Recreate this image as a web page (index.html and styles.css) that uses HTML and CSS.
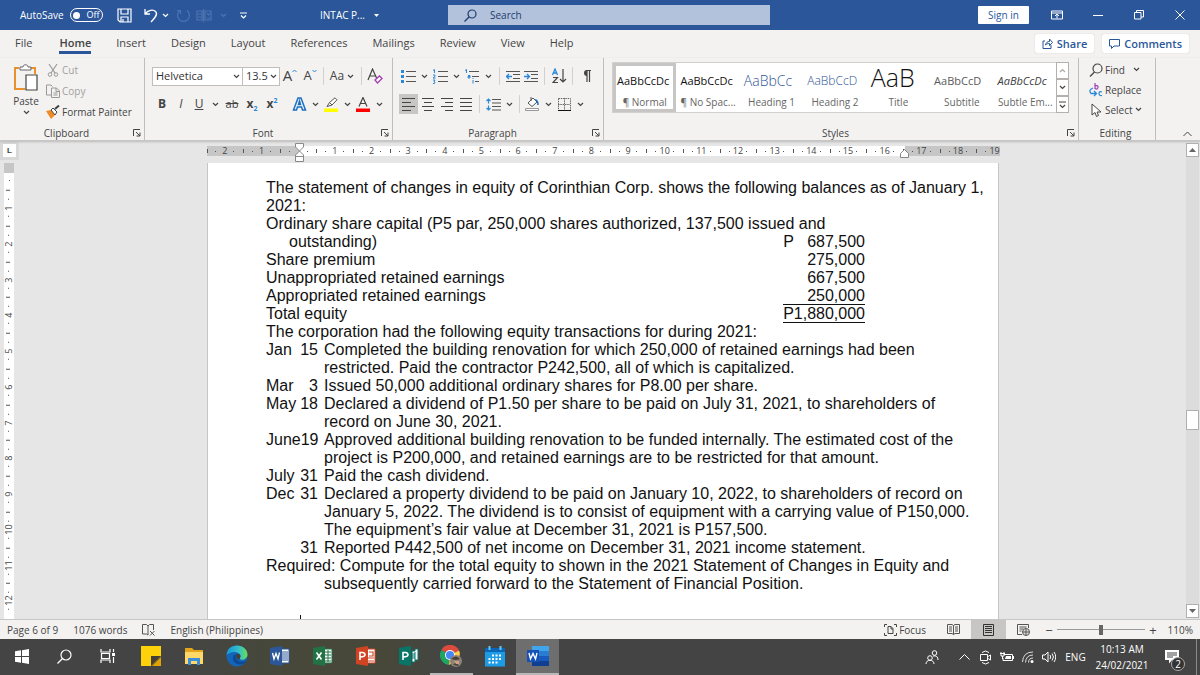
FILE: index.html
```html
<!DOCTYPE html>
<html lang="en">
<head>
<meta charset="utf-8">
<title>INTAC P... - Word</title>
<link rel="stylesheet" href="styles.css">
</head>
<body>
<svg class="sprite" aria-hidden="true">
  <symbol id="chev" viewBox="0 0 7 5"><path d="M1 1l2.500 2.500L6 1" fill="none" stroke="currentColor" stroke-width="1.200"/></symbol>
  <symbol id="launch" viewBox="0 0 8 8"><path d="M.5 7V.5H7M3 3l4 4M7 3.500V7H3.500" fill="none" stroke="#444"/></symbol>
  <symbol id="page-lines" viewBox="0 0 14 12"><path d="M1 .5h12v11H1zM3 3h8M3 5h8M3 7h8M3 9h8" fill="none" stroke="#333"/></symbol>
</svg>

<header class="titlebar">
  <div class="quick">
    <span class="autosave">AutoSave</span>
    <button class="toggle" aria-label="AutoSave off"><i></i>Off</button>
    <button class="q-save" aria-label="Save"><svg width="15" height="15" viewBox="0 0 15 15"><path d="M1 1h13v13H3l-2-2zM4 1v5h7V1M4 14V9h7v5M6 11v3" fill="none" stroke="#fff" stroke-width="1.200"/></svg></button>
    <button class="q-undo" aria-label="Undo"><svg width="14" height="15" viewBox="0 0 14 15"><path d="M1 1v5h5M1 6C4 2 9 1 11.500 3.500S12 9 7 14" fill="none" stroke="#fff" stroke-width="1.300"/></svg></button>
    <button class="q-chev" aria-label="Undo options"><svg width="7" height="5"><use href="#chev"/></svg></button>
    <button class="q-redo dim" aria-label="Redo"><svg width="15" height="15" viewBox="0 0 15 15"><path d="M4 2.500a6 6 0 1 0 7 0M4.500 6V2.500H1" fill="none" stroke="currentColor" stroke-width="1.200"/></svg></button>
    <button class="q-comp dim" aria-label="Compare"><svg width="16" height="13" viewBox="0 0 16 13"><path d="M1 2h5v9H1zM9 2h6v9H9zM7.500 0v13M2 8h3M2 5h3M11 4l1.500 2L14 4M11 9h3" fill="none" stroke="currentColor" stroke-width="1.200"/></svg></button>
    <button class="q-chev dim" aria-label="Compare options"><svg width="7" height="5"><use href="#chev"/></svg></button>
    <button class="q-more" aria-label="Customize"><svg width="7" height="7" viewBox="0 0 7 7"><path d="M0 1h7M1 3.500l2.500 2.500L6 3.500" fill="none" stroke="#fff" stroke-width="1.200"/></svg></button>
    <button class="doc-name">INTAC P... <svg width="5" height="3" viewBox="0 0 5 3"><path d="M0 0h5L2.500 3z" fill="#fff"/></svg></button>
  </div>
  <label class="search"><svg width="13" height="13" viewBox="0 0 13 13"><circle cx="8" cy="5" r="4" fill="none" stroke="#1e3c6e" stroke-width="1.200"/><path d="M5 8l-4.500 4.500" stroke="#1e3c6e" stroke-width="1.200"/></svg><input type="text" placeholder="Search" aria-label="Search"></label>
  <div class="window-tools">
    <button class="signin">Sign in</button>
    <button class="win" aria-label="Ribbon display options"><svg width="12" height="10" viewBox="0 0 12 10"><path d="M.5 1h11v8H.5zM.5 3h11M6 8.500V4.500M4 6l2-2 2 2" fill="none" stroke="#fff"/></svg></button>
    <button class="win" aria-label="Minimize"><svg width="10" height="10" viewBox="0 0 10 10"><path d="M0 5.500h10" stroke="#fff"/></svg></button>
    <button class="win" aria-label="Restore"><svg width="10" height="10" viewBox="0 0 10 10"><path d="M.5 2.500h6.500v6.500H.5zM2.500 2.500v-2h7v6.500H7" fill="none" stroke="#fff"/></svg></button>
    <button class="win" aria-label="Close"><svg width="10" height="10" viewBox="0 0 10 10"><path d="M.5.5l9 9M9.500.5l-9 9" stroke="#fff"/></svg></button>
  </div>
</header>

<nav class="tabs">
  <button class="file">File</button><button class="current">Home</button><button>Insert</button><button>Design</button><button>Layout</button><button>References</button><button>Mailings</button><button>Review</button><button>View</button><button>Help</button>
  <div class="tab-actions">
    <button><svg width="11" height="11" viewBox="0 0 11 11"><path d="M3 3H1v7.500h8V7M3.500 7C4 4.500 5.500 3.500 7.500 3.500V1l3 3.500-3 3V5.500c-2 0-3 .5-4 1.500z" fill="none" stroke="#2b579a"/></svg>Share</button>
    <button><svg width="11" height="10" viewBox="0 0 11 10"><path d="M.5.5h10v6.500H5L2.500 9.500V7h-2z" fill="none" stroke="#2b579a"/></svg>Comments</button>
  </div>
</nav>

<section class="ribbon">
  <div class="group clipboard">
    <div class="tools clip-tools">
      <button class="paste"><svg width="26" height="29" viewBox="0 0 26 29"><path d="M6 5H2v21h10M18 5h4v6" fill="none" stroke="#e8912d" stroke-width="2"/><path d="M7 7V4h3c0-3 5-3 5 0h3v3z" fill="#fff" stroke="#666"/><path d="M13 12h11v15H13z" fill="#fff" stroke="#444" stroke-width="1.200"/></svg><span>Paste</span><svg width="7" height="5"><use href="#chev"/></svg></button>
      <div class="stack">
        <button class="off"><svg width="14" height="14" viewBox="0 0 14 14"><path d="M3 1l6 9M11 1L5 10" stroke="#999" stroke-width="1.200"/><circle cx="4" cy="11.500" r="1.800" fill="none" stroke="#999"/><circle cx="10" cy="11.500" r="1.800" fill="none" stroke="#999"/></svg>Cut</button>
        <button class="off"><svg width="14" height="14" viewBox="0 0 14 14"><path d="M5 11H.5V1H5l1.500 1.500M5.500 4h5l3 3v6.500h-8zM10 4v3.500h3.500M7.500 9h4M7.500 11h4" fill="none" stroke="#999"/></svg>Copy</button>
        <button><svg width="14" height="14" viewBox="0 0 14 14"><path d="M0 6l5-1 4 5-4 4z" fill="#f08a24"/><path d="M5 5l2-2 4 4-2 3z" fill="#fff" stroke="#444"/><path d="M9 4l4-3.500" stroke="#444" stroke-width="2"/></svg>Format Painter</button>
      </div>
    </div>
    <div class="caption"><span>Clipboard</span><svg width="8" height="8"><use href="#launch"/></svg></div>
  </div>

  <div class="group font">
    <div class="tools rows">
      <div class="row">
        <select class="face" aria-label="Font"><option>Helvetica</option></select><select class="size" aria-label="Font size"><option>13.5</option></select>
        <button class="w20 big" aria-label="Grow font">A<svg width="5" height="4" viewBox="0 0 5 4"><path d="M.5 3L2.500 1l2 2" fill="none" stroke="#2b88d8"/></svg></button>
        <button class="w20 mid" aria-label="Shrink font">A<svg width="5" height="4" viewBox="0 0 5 4"><path d="M.5 1l2 2 2-2" fill="none" stroke="#2b88d8"/></svg></button>
        <i class="sep tight"></i>
        <button class="w30 case">Aa<svg width="7" height="5"><use href="#chev"/></svg></button>
        <i class="sep"></i>
        <button class="w18" aria-label="Clear formatting"><svg width="16" height="16" viewBox="0 0 16 16"><path d="M1 12L5.500 1 10 11M3 8h5" fill="none" stroke="#444" stroke-width="1.200"/><path d="M8 12l4.500-4 2.500 2.500-4.500 4.500z" fill="#fff" stroke="#a33db5" stroke-width="1.300"/></svg></button>
      </div>
      <div class="row">
        <button class="w20"><b>B</b></button>
        <button class="w18"><em>I</em></button>
        <button class="w18"><u>U</u></button>
        <button class="w14" aria-label="Underline style"><svg width="7" height="5"><use href="#chev"/></svg></button>
        <button class="w20 strike"><s>ab</s></button>
        <button class="w20"><b>x<sub>2</sub></b></button>
        <button class="w20"><b>x<sup>2</sup></b></button>
        <i class="sep"></i>
        <button class="w18" aria-label="Text effects"><svg width="15" height="14" viewBox="0 0 15 14"><path d="M1.500 13L6 1h3l4.500 12h-3L9.500 10h-4l-1 3zM6.500 7.500h2L7.500 4z" fill="#e8f3fc" stroke="#1f6fc0" stroke-width="1.500"/></svg></button>
        <button class="w14" aria-label="Text effects options"><svg width="7" height="5"><use href="#chev"/></svg></button>
        <button class="w18" aria-label="Highlight"><svg width="15" height="15" viewBox="0 0 15 15"><path d="M0 11.500h14V15H0z" fill="#ff0"/><path d="M3 9.500l2.500-4L11 .8l2 2L8 8l-5 1.500zM5.500 5.500L8 8" fill="#fff" stroke="#555"/></svg></button>
        <button class="w14" aria-label="Highlight options"><svg width="7" height="5"><use href="#chev"/></svg></button>
        <button class="w18" aria-label="Font colour"><svg width="15" height="15" viewBox="0 0 15 15"><path d="M0 11.500h14V15H0z" fill="red"/><path d="M3 9.500L7 .5l4 9M4.500 6.500h5" fill="none" stroke="#444" stroke-width="1.200"/></svg></button>
        <button class="w14" aria-label="Font colour options"><svg width="7" height="5"><use href="#chev"/></svg></button>
      </div>
    </div>
    <div class="caption"><span>Font</span><svg width="8" height="8"><use href="#launch"/></svg></div>
  </div>

  <div class="group para">
    <div class="tools rows">
      <div class="row">
        <button class="w18" aria-label="Bullets"><svg width="15" height="14" viewBox="0 0 15 14"><path d="M5 2.500h10M5 7.500h10M5 12.500h10" stroke="#555"/><path d="M0 1h3v3H0zM0 6h3v3H0zM0 11h3v3H0z" fill="#2b88d8"/></svg></button>
        <button class="w14" aria-label="Bullet options"><svg width="7" height="5"><use href="#chev"/></svg></button>
        <button class="w18" aria-label="Numbering"><svg width="15" height="15" viewBox="0 0 15 15"><path d="M5 2.500h10M5 7.500h10M5 12.500h10" stroke="#555"/><path d="M0 1.500L1.500.5V4M0 6h2v1.500L0 9h2.500M0 11h2l-1 1.500 1 .5-.5 1.500H0" fill="none" stroke="#2b88d8"/></svg></button>
        <button class="w14" aria-label="Numbering options"><svg width="7" height="5"><use href="#chev"/></svg></button>
        <button class="w18" aria-label="Multilevel list"><svg width="15" height="15" viewBox="0 0 15 15"><path d="M4 2.500h10M7 7.500h7M10 12.500h4" stroke="#555"/><path d="M0 1.500L1.500.5V4M3 6.500h2V9H3V7.500h2M8 11v3.500M8 9v1" fill="none" stroke="#2b88d8"/></svg></button>
        <button class="w14" aria-label="Multilevel options"><svg width="7" height="5"><use href="#chev"/></svg></button>
        <i class="sep"></i>
        <button class="w18" aria-label="Decrease indent"><svg width="14" height="13" viewBox="0 0 14 13"><path d="M0 1.500h14M7 4.500h7M7 8.500h7M0 11.500h14" stroke="#555"/><path d="M0 6.500h6M3 4L.5 6.500 3 9" fill="none" stroke="#2b88d8" stroke-width="1.300"/></svg></button>
        <button class="w18" aria-label="Increase indent"><svg width="14" height="13" viewBox="0 0 14 13"><path d="M0 1.500h14M7 4.500h7M7 8.500h7M0 11.500h14" stroke="#555"/><path d="M0 6.500h5.500M3 4l2.500 2.500L3 9" fill="none" stroke="#2b88d8" stroke-width="1.300"/></svg></button>
        <i class="sep"></i>
        <button class="w20" aria-label="Sort"><svg width="15" height="16" viewBox="0 0 15 16"><path d="M.5 7L3 1l2.500 6M1.500 5h3" fill="none" stroke="#2b88d8" stroke-width="1.300"/><path d="M1 9.500h4.500L1 14.500h5" fill="none" stroke="#444" stroke-width="1.200"/><path d="M11 1v13M8 11l3 3 3-3" fill="none" stroke="#444" stroke-width="1.200"/></svg></button>
        <i class="sep tight"></i>
        <button class="w20" aria-label="Show marks"><svg width="9" height="12" viewBox="0 0 9 12"><path d="M5 0a3 3 0 0 0 0 6z" fill="#444"/><path d="M4 .5h5M5 0v12M7.500 0v12" stroke="#444" stroke-width="1.200"/></svg></button>
      </div>
      <div class="row">
        <button class="w19 on" aria-label="Align left"><svg width="14" height="13" viewBox="0 0 14 13"><path d="M0 .5h13M0 4.500h9M0 8.500h13M0 12.500h9" stroke="#444"/></svg></button>
        <button class="w19" aria-label="Centre"><svg width="14" height="13" viewBox="0 0 14 13"><path d="M1 .5h12M3 4.500h8M1 8.500h12M3 12.500h8" stroke="#444"/></svg></button>
        <button class="w19" aria-label="Align right"><svg width="14" height="13" viewBox="0 0 14 13"><path d="M1 .5h12M5 4.500h8M1 8.500h12M5 12.500h8" stroke="#444"/></svg></button>
        <button class="w19" aria-label="Justify"><svg width="14" height="13" viewBox="0 0 14 13"><path d="M1 .5h12M1 4.500h12M1 8.500h12M1 12.500h12" stroke="#444"/></svg></button>
        <i class="sep"></i>
        <button class="w18" aria-label="Line spacing"><svg width="15" height="13" viewBox="0 0 15 13"><path d="M6 1.500h9M6 5h9M6 8.500h9M6 12h9" stroke="#555"/><path d="M2.500 1v4.500M.5 3l2-2 2 2M2.500 7.500V12M.5 10l2 2 2-2" fill="none" stroke="#2b88d8" stroke-width="1.200"/></svg></button>
        <button class="w14" aria-label="Line spacing options"><svg width="7" height="5"><use href="#chev"/></svg></button>
        <i class="sep tight"></i>
        <button class="w18" aria-label="Shading"><svg width="15" height="14" viewBox="0 0 15 14"><path d="M.5 11.500h13v2H.5z" fill="#fff" stroke="#999"/><path d="M3 6l5-5 4 4-5 4.500zM6 0v4" fill="#fff" stroke="#555"/><path d="M10 3q3 0 3 5" fill="none" stroke="#1f6fc0" stroke-width="1.500"/></svg></button>
        <button class="w14" aria-label="Shading options"><svg width="7" height="5"><use href="#chev"/></svg></button>
        <button class="w18" aria-label="Borders"><svg width="13" height="13" viewBox="0 0 13 13"><path d="M.5.5h12v12M.5.5v12M6.500 0v12M0 6.500h12" fill="none" stroke="#666" stroke-dasharray="1.500 .8"/><path d="M0 12.500h13" stroke="#111"/></svg></button>
        <button class="w14" aria-label="Borders options"><svg width="7" height="5"><use href="#chev"/></svg></button>
      </div>
    </div>
    <div class="caption"><span>Paragraph</span><svg width="8" height="8"><use href="#launch"/></svg></div>
  </div>

  <div class="group styles">
    <div class="tools gallery">
      <button class="style chosen"><span class="sample">AaBbCcDc</span><span>¶ Normal</span></button>
      <button class="style"><span class="sample">AaBbCcDc</span><span>¶ No Spac...</span></button>
      <button class="style"><span class="sample h1">AaBbCc</span><span>Heading 1</span></button>
      <button class="style"><span class="sample h2">AaBbCcD</span><span>Heading 2</span></button>
      <button class="style"><span class="sample title">AaB</span><span>Title</span></button>
      <button class="style"><span class="sample sub">AaBbCcD</span><span>Subtitle</span></button>
      <button class="style"><span class="sample subtle">AaBbCcDc</span><span>Subtle Em...</span></button>
      <div class="gallery-nav">
        <button class="faint" aria-label="Up"><svg width="7" height="5" class="flip"><use href="#chev"/></svg></button>
        <button aria-label="Down"><svg width="7" height="5"><use href="#chev"/></svg></button>
        <button aria-label="More"><svg width="7" height="8" viewBox="0 0 7 8"><path d="M0 1h7M1 4l2.500 2.500L6 4" fill="none" stroke="#444" stroke-width="1.200"/></svg></button>
      </div>
    </div>
    <div class="caption"><span>Styles</span><svg width="8" height="8"><use href="#launch"/></svg></div>
  </div>

  <div class="group editing">
    <div class="tools stack">
      <button><svg width="14" height="14" viewBox="0 0 14 14"><circle cx="8.500" cy="5.500" r="4.500" fill="none" stroke="#444" stroke-width="1.200"/><path d="M5.500 9L1 13.500" stroke="#444" stroke-width="1.200"/></svg>Find <svg class="far" width="7" height="5"><use href="#chev"/></svg></button>
      <button><svg width="14" height="14" viewBox="0 0 14 14"><path d="M6 0v6M6 3q3.500-1 3 1.500T6 5.500" fill="none" stroke="#a33db5" stroke-width="1.200"/><path d="M13 9q-3-1-3 1.500T13 12.500" fill="none" stroke="#2b88d8" stroke-width="1.200"/><path d="M4 5Q-1 7 2 10.500H7M5 8l2.500 2.500L5 13" fill="none" stroke="#2b88d8" stroke-width="1.300"/></svg>Replace</button>
      <button><svg width="14" height="14" viewBox="0 0 14 14"><path d="M3 1v11l3-2.500 1.500 4 2-1L8 9h4z" fill="#fff" stroke="#444"/></svg>Select <svg width="7" height="5"><use href="#chev"/></svg></button>
    </div>
    <div class="caption"><span>Editing</span></div>
  </div>
  <button class="collapse" aria-label="Collapse ribbon"><svg width="9" height="6" viewBox="0 0 9 6"><path d="M.5 5l4-4 4 4" fill="none" stroke="#444"/></svg></button>
</section>

<main class="workspace">
  <div class="vside">
    <span class="tabstop">L</span>
    <div class="vruler">
      <span class="vgray"></span><span class="vlead"></span>
      <div class="vscale"><span>1</span><span>2</span><span>3</span><span>4</span><span>5</span><span>6</span><span>7</span><span>8</span><span>9</span><span>10</span><span>11</span><span>12</span></div>
    </div>
  </div>
  <div class="canvas">
    <div class="ruler">
      <div class="scale"><span>2</span><span>1</span><span></span><span>1</span><span>2</span><span>3</span><span>4</span><span>5</span><span>6</span><span>7</span><span>8</span><span>9</span><span>10</span><span>11</span><span>12</span><span>13</span><span>14</span><span>15</span><span>16</span><span>17</span><span>18</span><span>19</span></div>
      <svg class="mark-left" width="9" height="19" viewBox="0 0 9 19"><path d="M.5.5h8v3.500l-4 4-4-4zM4.500 8l4 4v6.500h-8V12zM.5 13.500h8" fill="#fff" stroke="#888"/></svg>
      <svg class="mark-right" width="9" height="9" viewBox="0 0 9 9"><path d="M4.500.5l4 4v4h-8v-4z" fill="#fff" stroke="#888"/></svg>
    </div>
    <article class="page">
      <p>The statement of changes in equity of Corinthian Corp. shows the following balances as of January 1,<br>2021:</p>
      <table class="balances">
        <tr><th colspan="3">Ordinary share capital (P5 par, 250,000 shares authorized, 137,500 issued and</th></tr>
        <tr><th class="indent">outstanding)</th><td>P</td><td class="num">687,500</td></tr>
        <tr><th>Share premium</th><td></td><td class="num">275,000</td></tr>
        <tr><th>Unappropriated retained earnings</th><td></td><td class="num">667,500</td></tr>
        <tr><th>Appropriated retained earnings</th><td class="rule"></td><td class="num rule">250,000</td></tr>
        <tr><th>Total equity</th><td class="num rule" colspan="2">P1,880,000</td></tr>
      </table>
      <p>The corporation had the following equity transactions for during 2021:</p>
      <div class="entries">
        <div class="date"><span>Jan</span><span>15</span></div><p>Completed the building renovation for which 250,000 of retained earnings had been<br>restricted. Paid the contractor P242,500, all of which is capitalized.</p>
        <div class="date"><span>Mar</span><span>3</span></div><p>Issued 50,000 additional ordinary shares for P8.00 per share.</p>
        <div class="date"><span>May</span><span>18</span></div><p>Declared a dividend of P1.50 per share to be paid on July 31, 2021, to shareholders of<br>record on June 30, 2021.</p>
        <div class="date"><span>June</span><span>19</span></div><p>Approved additional building renovation to be funded internally. The estimated cost of the<br>project is P200,000, and retained earnings are to be restricted for that amount.</p>
        <div class="date"><span>July</span><span>31</span></div><p>Paid the cash dividend.</p>
        <div class="date"><span>Dec</span><span>31</span></div><p>Declared a property dividend to be paid on January 10, 2022, to shareholders of record on<br>January 5, 2022. The dividend is to consist of equipment with a carrying value of P150,000.<br>The equipment’s fair value at December 31, 2021 is P157,500.</p>
        <div class="date"><span></span><span>31</span></div><p>Reported P442,500 of net income on December 31, 2021 income statement.</p>
      </div>
      <p class="required">Required: Compute for the total equity to shown in the 2021 Statement of Changes in Equity and<br>subsequently carried forward to the Statement of Financial Position.</p>
      <i class="caret"></i>
    </article>
  </div>
  <div class="scrollbar">
    <button aria-label="Scroll up"><svg width="7" height="4" viewBox="0 0 7 4"><path d="M0 4h7L3.500 0z" fill="#666"/></svg></button>
    <div class="track"><i class="thumb"></i></div>
    <button aria-label="Scroll down"><svg width="7" height="4" viewBox="0 0 7 4"><path d="M0 0h7L3.500 4z" fill="#666"/></svg></button>
  </div>
</main>

<footer class="status">
  <span>Page 6 of 9</span><span>1076 words</span>
  <svg width="13" height="12" viewBox="0 0 13 12"><path d="M6 2L4.500.5H.5v9.500h4L6 11M6 2v9M6 2L7.500.5h4V6M8 7l4.500 4.500M12.500 7L8 11.500" fill="none" stroke="#555"/></svg>
  <span>English (Philippines)</span>
  <div class="views">
    <button class="focus"><svg width="13" height="12" viewBox="0 0 13 12"><path d="M.5 3V.5H3M10 .5h2.500V3M12.500 9v2.500H10M3 11.500H.5V9M4 2.500h3l2 2v5H4zM7 2.500V5h2" fill="none" stroke="#444"/></svg>Focus</button>
    <button class="view" aria-label="Read mode"><svg width="13" height="11" viewBox="0 0 13 11"><path d="M.5.5h4.500l1.500 1L8 .5h4.500v9H8l-1.500 1-1.500-1H.5zM6.500 1.500v9M2 3h3M2 5h3M2 7h3M8 3h3M8 5h3M8 7h3" fill="none" stroke="#555"/></svg></button>
    <button class="view on" aria-label="Print layout"><svg width="11" height="12" viewBox="0 0 11 12"><path d="M.5.5h10v11H.5zM2 2.500h7M2 4.500h7M2 6.500h7M2 8.500h7" fill="none" stroke="#333"/></svg></button>
    <button class="view" aria-label="Web layout"><svg width="13" height="12" viewBox="0 0 13 12"><path d="M5 10.500H.5v-10h11V4M2.500 3h7M2.500 5h4M2.500 7h2" fill="none" stroke="#555"/><circle cx="9" cy="8" r="3.500" fill="#ddd" stroke="#555"/><path d="M5.500 8h7M9 4.500v7" stroke="#555"/></svg></button>
    <button class="step">−</button><input type="range" min="10" max="196" value="104" aria-label="Zoom"><button class="step">+</button>
    <span class="percent">110%</span>
  </div>
</footer>

<nav class="taskbar">
  <button aria-label="Start"><svg width="14" height="15" viewBox="0 0 14 15"><path d="M0 2.200L6 1.300V7H0zM7 1.200L14 0v7H7zM0 8h6v5.700L0 12.800zM7 8h7v7L7 13.800z" fill="#fff"/></svg></button>
  <button aria-label="Search"><svg width="15" height="15" viewBox="0 0 15 15"><circle cx="9" cy="6" r="5" fill="none" stroke="#fff" stroke-width="1.200"/><path d="M5.500 9.500L.5 14.500" stroke="#fff" stroke-width="1.300"/></svg></button>
  <button aria-label="Task view"><svg width="16" height="14" viewBox="0 0 16 14"><path d="M1 0v3h9V0M1 14v-3h9v3M1.500 4.500h8v5h-8zM13.500 0v3M13.500 8v6" fill="none" stroke="#fff" stroke-width="1.200"/><path d="M12 4h3v3h-3z" fill="#fff"/></svg></button>
  <button aria-label="Sticky Notes"><svg width="20" height="20" viewBox="0 0 20 20"><path d="M0 0h20v10L10 20H0z" fill="#fdd20a"/><path d="M10 10h10L10 20z" fill="#453f35"/><path d="M20 11v9h-9z" fill="#e0a300"/></svg></button>
  <button aria-label="File Explorer"><svg width="20" height="17" viewBox="0 0 20 17"><path d="M1 0h7l2 2h9v13H1z" fill="#e5a51b"/><path d="M1 4h18v12H1z" fill="#ffd869"/><path d="M4 10h12v7h-3v-4H7v4H4z" fill="#3b8fd8"/></svg></button>
  <button aria-label="Edge"><svg width="22" height="22" viewBox="0 0 22 22"><defs><linearGradient id="eg" x1="0" x2="1"><stop offset="0" stop-color="#1593dc"/><stop offset=".6" stop-color="#35c1c5"/><stop offset="1" stop-color="#6cdc55"/></linearGradient></defs><circle cx="11" cy="11" r="10.500" fill="#1265b8"/><path d="M.5 10C1 4 5 .5 11 .5s10.500 4 10.500 9c0 4-4 6-7 5-2-1 0-2 0-4-1-4-9-5-14-.5z" fill="url(#eg)"/><path d="M8 10c-3 5 1 10 7 9.500 3 0 5-3 6-4-3 1-6 2-9 0-2-1-3-3-2-6z" fill="#0c4a96"/><path d="M10 9.500c2-1 4.500 0 4.500 2 0 1-1.500 2 0 3-3 0-5-2-4.500-5z" fill="#414238"/></svg></button>
  <button aria-label="Word 2016"><svg width="20" height="20" viewBox="0 0 20 20"><path d="M9 3h10v14H9z" fill="#fff" stroke="#2b579a"/><path d="M12 6h6M12 8h6M12 10h6M12 12h6M12 14h6" stroke="#2b579a"/><path d="M0 2l12-2v20L0 18z" fill="#2b579a"/><path d="M2.500 7l1.500 6 2-5.500L8 13l1.500-6.500" fill="none" stroke="#fff" stroke-width="1.300"/></svg></button>
  <button aria-label="Excel"><svg width="20" height="20" viewBox="0 0 20 20"><path d="M9 3h10v14H9z" fill="#fff" stroke="#217346"/><path d="M12 6h6M12 9h6M12 12h6M12 15h6M15 4v12" stroke="#217346"/><path d="M0 2l12-2v20L0 18z" fill="#217346"/><path d="M3.500 6.500l5 7M8.500 6.500l-5 7" stroke="#fff" stroke-width="1.600"/></svg></button>
  <button aria-label="PowerPoint"><svg width="20" height="20" viewBox="0 0 20 20"><path d="M9 3h10v14H9z" fill="#fff" stroke="#d04423"/><path d="M12 12h6M12 15h6M13 6h4v4h-4" fill="none" stroke="#d04423" stroke-width="1.200"/><path d="M0 2l12-2v20L0 18z" fill="#d04423"/><path d="M4 14V6.500h2.500q2.500.3 2.500 2.300T4 11" fill="none" stroke="#fff" stroke-width="1.600"/></svg></button>
  <button aria-label="Publisher"><svg width="20" height="20" viewBox="0 0 20 20"><path d="M13 5h3V3h3v11h-3v2h-3z" fill="#fff" stroke="#077568"/><path d="M13 8h3M13 10h3M13 12h3M16 6v8" stroke="#077568"/><path d="M0 2l12-2v20L0 18z" fill="#077568"/><path d="M4 14V6.500h2.500q2.500.3 2.500 2.300T4 11" fill="none" stroke="#fff" stroke-width="1.600"/></svg></button>
  <button class="running" aria-label="Chrome"><svg width="23" height="23" viewBox="0 0 23 23"><path d="M10 10L1.300 5A10 10 0 0 1 19 5.500z" fill="#dd4b3e"/><path d="M10 10L1.300 5A10 10 0 0 0 9 20z" fill="#1fa463"/><path d="M10 10l9-4.500Q23 13 9 20z" fill="#ffcd46"/><circle cx="10" cy="10" r="5" fill="#fff"/><circle cx="10" cy="10" r="4" fill="#4587f4"/><circle cx="16" cy="16" r="6" fill="#8d8277"/><path d="M11 14q5-5 9 0l-4 1zM13 20l3-3 3 4z" fill="#4b4038"/><path d="M14 16h5v3h-3z" fill="#d0a184"/></svg></button>
  <button aria-label="Calendar"><svg width="20" height="21" viewBox="0 0 20 21"><path d="M0 2h20v18.500H0z" fill="#1c9be6"/><path d="M0 2h20v4H0z" fill="#0c66b7"/><path d="M4.500 0v4M15.500 0v4" stroke="#62c7f7" stroke-width="2"/><path d="M7 9.500h10M3.500 13h13.500M3.500 16.500h9" stroke="#fff" stroke-width="2" stroke-dasharray="2 1.500"/></svg></button>
  <button class="running active" aria-label="Word"><svg width="22" height="20" viewBox="0 0 22 20"><path d="M5 0h17v5H5z" fill="#41a5ee"/><path d="M5 5h17v5H5z" fill="#2b7cd3"/><path d="M5 10h17v5H5z" fill="#185abd"/><path d="M5 15h17v5H5z" fill="#103f91"/><path d="M0 4h12v12H0z" fill="#1551b5"/><path d="M2 7l1.500 6L6 7.500 8.500 13 10 7" fill="none" stroke="#fff" stroke-width="1.400"/></svg></button>
  <div class="tray">
    <button class="people" aria-label="People"><svg width="14" height="15" viewBox="0 0 14 15"><circle cx="9.500" cy="3" r="2.300" fill="none" stroke="#fff"/><circle cx="5" cy="8" r="2.300" fill="none" stroke="#fff"/><path d="M1 14c0-5 8-5 8 0M8 6q5-1 5 4" fill="none" stroke="#fff"/></svg></button>
    <button aria-label="Hidden icons"><svg width="11" height="6" viewBox="0 0 11 6"><path d="M.5 5.500l5-5 5 5" fill="none" stroke="#fff"/></svg></button>
    <button aria-label="Meet"><svg width="11" height="15" viewBox="0 0 11 15"><path d="M.5 4.500h7v6h-7zM8 6.500l2.500-1.500v5L8 8.500M2 2.500q3.500-3 7 0M2 12.500q3.500 3 7 0" fill="none" stroke="#fff"/></svg></button>
    <button aria-label="Battery"><svg width="14" height="10" viewBox="0 0 14 10"><path d="M4 2.500h8.500v6H3V6M13.500 4v3M0 1.500h5M1 0v4h3V0M2.500 4v3" fill="none" stroke="#fff"/><path d="M6 4h5v3H5z" fill="#fff"/></svg></button>
    <button aria-label="Wi-Fi"><svg width="12" height="12" viewBox="0 0 12 12"><path d="M.5 11Q1 1 11 1M3.500 11.500Q4 4 11 4M6.500 11.500Q6.500 7 11 7" fill="none" stroke="#ddd"/><circle cx="10" cy="10.500" r="1.500" fill="#fff"/></svg></button>
    <button aria-label="Volume"><svg width="14" height="12" viewBox="0 0 14 12"><path d="M.5 4H3l3-3v10L3 8H.5zM8 4q1.500 2 0 4M10 2.500q3 3.500 0 7M12 1q3.500 5 0 10" fill="none" stroke="#fff"/></svg></button>
    <button class="lang">ENG</button>
    <button class="clock"><span>10:13 AM</span><span>24/02/2021</span></button>
    <button class="notice" aria-label="Notifications"><svg width="14" height="14" viewBox="0 0 14 14"><path d="M0 0h14v10H7l-3 3.500V10H0z" fill="#fff"/><path d="M2 3h10M2 5h10M2 7h6" stroke="#444"/></svg><span>2</span></button>
    <i class="desktop"></i>
  </div>
</nav>
</body>
</html>
```
FILE: styles.css
```css
* { box-sizing: border-box; }
body { margin: 0; height: 100vh; display: flex; flex-direction: column; overflow: hidden; background: #e6e6e6; color: #444; font: 10px/14px "Open Sans", "Noto Sans", sans-serif; }
button { border: 0; padding: 0; margin: 0; background: none; color: inherit; font: inherit; display: flex; align-items: center; justify-content: center; white-space: nowrap; flex: none; }
svg { flex: none; display: block; }
.sprite { position: absolute; width: 0; height: 0; }

.titlebar { flex: none; height: 30px; background: #2b579a; color: #fff; display: grid; grid-template-columns: 448px 1fr 430px; align-items: center; }
.quick { display: flex; align-items: center; padding-left: 20px; }
.autosave { width: 50px; }
.toggle { width: 33px; height: 14px; border: 1px solid #fff; border-radius: 7px; gap: 6px; font-size: 9px; }
.toggle i { width: 7px; height: 7px; border-radius: 50%; background: #fff; }
.q-save { width: 42px; }
.q-undo { width: 12px; }
.q-chev { width: 16px; }
.q-redo { width: 20px; }
.q-comp { width: 22px; }
.q-more { width: 24px; }
.dim { color: #4c74b0; }
.doc-name { margin-left: auto; margin-right: 69px; gap: 9px; }
.search { height: 20px; background: #b2c2dc; display: flex; align-items: center; padding-left: 16px; gap: 13px; }
.search input { flex: 1; min-width: 0; border: 0; padding: 0; background: none; font: inherit; outline: 0; }
.search input::placeholder { color: #1e3c6e; opacity: 1; }
.window-tools { display: flex; align-items: center; justify-content: flex-end; }
.signin { width: 51px; height: 18px; background: #fff; color: #2b579a; border-radius: 1px; margin-right: 7px; }
.win { width: 41px; }

.tabs { flex: none; height: 28px; background: #f3f2f1; display: flex; padding: 0 11px 0 15px; gap: 25px; font-size: 11px; }
.tabs > button { height: 24px; border-bottom: 3px solid transparent; padding-top: 4px; }
.tabs > .file { padding-right: 2px; }
.tabs > .current { border-color: #2b579a; font-weight: 600; }
.tab-actions { margin-left: auto; display: flex; gap: 8px; align-self: flex-start; padding-top: 4px; }
.tab-actions button { height: 19px; padding: 0 7px; gap: 4px; background: #fff; color: #2b579a; font-weight: 600; border-radius: 2px; box-shadow: 0 0 1px #aaa; }

.ribbon { flex: none; height: 83px; background: #f3f2f1; border-bottom: 1px solid #c8c6c4; display: flex; box-shadow: 0 1px 2px #bbb; z-index: 1; }
.group { display: grid; grid-template-columns: minmax(0, 1fr); grid-template-rows: 65px 15px; border-right: 1px solid #c0bebc; padding-top: 2px; }
.clipboard { width: 145px; }
.font { width: 248px; }
.para { width: 211px; }
.styles { flex: 1; }
.editing { width: 77px; }
.caption { display: flex; align-items: center; padding-right: 3px; }
.caption span { flex: 1; text-align: center; }
.clip-tools { display: flex; padding-left: 13px; }
.paste { width: 26px; margin-right: 4px; flex-direction: column; gap: 2px; padding-bottom: 7px; }
.stack { display: flex; flex-direction: column; justify-content: center; gap: 7px; padding: 0 0 4px 3px; }
.stack button { justify-content: flex-start; gap: 2px; height: 14px; }
.off { color: #a19f9d; }
.rows { display: flex; flex-direction: column; gap: 8px; padding: 6px 7px 0; }
.row { height: 20px; display: flex; align-items: center; }
.row button { height: 20px; font-size: 12px; }
.row .strike { font-size: 11px; }
select { appearance: none; height: 19px; border: 1px solid #c0bebc; border-radius: 0; padding: 0 3px; font: inherit; font-size: 11px; color: #333; background: #fff url("data:image/svg+xml,%3Csvg xmlns='http://www.w3.org/2000/svg' width='7' height='5'%3E%3Cpath d='M1 1l2.500 2.500L6 1' fill='none' stroke='%23444' stroke-width='1.200'/%3E%3C/svg%3E") no-repeat right 2px center; }
.face { width: 91px; }
.size { width: 38px; margin-left: -1px; }
.w14 { width: 14px; }
.w18 { width: 18px; }
.w19 { width: 19px; }
.w20 { width: 20px; }
.w30 { width: 30px; }
.row .big { font-size: 15px; align-items: flex-start; line-height: 18px; }
.row .mid { font-size: 13px; align-items: flex-start; line-height: 19px; }
.big svg, .mid svg { margin-top: 3px; }
.row .case { gap: 3px; }
.sep { width: 1px; height: 18px; background: #d2d0ce; margin: 0 4px; }
.sep.tight { margin: 0 3px; }
sub, sup { font-size: 7px; line-height: 0; color: #2b88d8; }
.on { background: #c8c6c4; }
.para .rows { padding-left: 6px; }

.gallery { display: flex; margin: 2px 9px 12px 8px; border: 1px solid #d2d0ce; background: #fff; }
.style { flex: 1 1 0; min-width: 0; flex-direction: column; padding: 0 4px; color: #666; justify-content: flex-end; }
.sample { width: 100%; height: 31px; line-height: 34px; text-align: left; font-size: 11px; color: #111; }
.style span + span { height: 17px; }
.chosen { outline: 3px solid #c8c6c4; outline-offset: -3px; }
.h1 { font-size: 14px; color: #2f5496; font-weight: 300; }
.h2 { font-size: 12px; color: #2f5496; font-weight: 300; }
.title { font-size: 25px; font-weight: 300; line-height: 26px; }
.sub { color: #5a5a5a; }
.subtle { font-style: italic; color: #404040; }
.gallery-nav { width: 13px; display: grid; grid-template-rows: 1fr 1fr 1fr; margin: -1px; }
.gallery-nav button { border: 1px solid #b3b0ad; }
.gallery-nav .faint { color: #aaa; }
.flip { transform: rotate(180deg); }
.editing .stack { padding-left: 10px; padding-bottom: 6px; gap: 6px; }
.far { margin-left: 6px; }
.collapse { width: 44px; align-items: flex-end; justify-content: flex-end; padding: 0 8px 3px 0; }

.workspace { flex: 1; min-height: 0; display: flex; overflow: hidden; }
.vside { width: 20px; display: flex; flex-direction: column; }
.tabstop { flex: none; width: 19px; height: 19px; border: 3px solid #d8d8d8; background: #fff; font: bold 8px/14px "Liberation Sans", sans-serif; text-align: center; margin-bottom: 3px; }
.vruler { flex: 1; min-height: 0; width: 10px; margin-left: 4px; background: #fff; display: flex; flex-direction: column; font: 9px/10px "Open Sans", sans-serif; }
.vgray { flex: none; height: 10px; background: #c6c6c6; }
.vlead { flex: none; height: 17px; background: linear-gradient(#555, #555) 5px 7px / 1px 1px no-repeat; }
.vscale { flex: 1; min-height: 0; display: grid; grid-template-rows: repeat(12, minmax(0, 8.500%)); }
.vscale span { writing-mode: vertical-rl; transform: rotate(180deg); text-align: center; background: linear-gradient(#555, #555) 4px 100% / 4px 1px no-repeat, linear-gradient(#555, #555) 5px 25% / 1px 1px no-repeat, linear-gradient(#555, #555) 5px 75% / 1px 1px no-repeat; }
.canvas { flex: 1; min-width: 0; display: flex; flex-direction: column; align-items: center; }
.ruler { position: relative; flex: none; width: 100%; max-width: 793px; height: 10px; margin: 5px 0 7px; font-size: 9px; line-height: 10px; }
.scale { display: grid; grid-template-columns: repeat(22, 4.624%); height: 10px; background: linear-gradient(90deg, #c6c6c6 11.700%, #fff 11.700%, #fff 88%, #c6c6c6 88%); }
.scale span { text-align: center; background: linear-gradient(#555, #555) 0 3px / 1px 4px no-repeat, linear-gradient(#555, #555) 25% 5px / 1px 1px no-repeat, linear-gradient(#555, #555) 75% 5px / 1px 1px no-repeat; }
.scale span:last-child { background: linear-gradient(#555, #555) 0 3px / 1px 4px no-repeat, linear-gradient(#555, #555) 25% 5px / 1px 1px no-repeat; }
.mark-left { position: absolute; left: 11.200%; top: -3px; }
.mark-right { position: absolute; left: 87.500%; top: 3px; }
.page { flex: 1; min-height: 0; position: relative; width: 100%; max-width: 792px; background: #fff; border: solid #c6c6c6; border-width: 0 1px; padding: 16px 16px 0 58px; color: #111; font: 16px/18px "Liberation Sans", Arial, sans-serif; white-space: nowrap; overflow: hidden; }
.page p { margin: 0; }
.balances { border-collapse: collapse; width: 599px; table-layout: auto; }
.balances th { font-weight: 400; text-align: left; padding: 0; }
.balances th.indent { padding-left: 23px; }
.balances td { padding: 0; width: 14px; }
.balances .num { text-align: right; width: 67px; }
.balances .rule { box-shadow: inset 0 -1px #111; }
.entries { display: grid; grid-template-columns: 52px 1fr; column-gap: 6px; }
.date { display: flex; justify-content: space-between; }
.required { padding-left: 58px; text-indent: -58px; }
.caret { display: block; width: 1px; height: 18px; background: #111; margin: 22px 0 0 34px; }
.scrollbar { width: 14px; display: flex; flex-direction: column; padding: 2px 1px 1px 0; }
.scrollbar button { height: 14px; background: #fff; border: 1px solid #b0b0b0; }
.track { flex: 1; background: #dcdcdc; display: flex; flex-direction: column; }
.track::before { content: ""; flex: 254; }
.track::after { content: ""; flex: 174; }
.thumb { height: 20px; background: #fff; border: 1px solid #b0b0b0; }

.status { flex: none; height: 20px; border-top: 1px solid #c8c6c4; background: #f3f2f1; display: flex; align-items: center; padding: 0 7px; gap: 15px; }
.views { margin-left: auto; display: flex; align-items: center; height: 19px; }
.focus { gap: 2px; margin-right: 10px; }
.view { width: 35px; height: 19px; }
.step { width: 16px; font-size: 13px; }
input[type="range"] { appearance: none; width: 88px; height: 12px; margin: 0; background: linear-gradient(#999, #999) 0 50% / 100% 1px no-repeat; }
input[type="range"]::-webkit-slider-thumb { appearance: none; width: 4px; height: 10px; background: #666; }
.percent { width: 32px; text-align: right; }

.taskbar { flex: none; height: 36px; display: flex; background: linear-gradient(90deg, #444 0, #444 180px, #47483a 280px, #47483a 390px, #444 450px); color: #fff; }
.taskbar > button { width: 43px; border-bottom: 2px solid transparent; }
.taskbar > .running { border-bottom-color: #b8b8b8; }
.taskbar > .active { background: #6e6e6e; }
.tray { margin-left: auto; display: flex; align-items: center; }
.tray button { width: 21px; height: 36px; }
.tray .people { width: 44px; }
.tray .lang { width: 33px; }
.tray .clock { width: 60px; flex-direction: column; gap: 2px; }
.tray .notice { width: 40px; position: relative; margin-right: 4px; }
.notice span { position: absolute; left: 19px; top: 18px; width: 14px; height: 14px; border-radius: 50%; border: 1px solid #aaa; background: #333; line-height: 12px; text-align: center; }
.desktop { width: 1px; height: 36px; background: #888; margin-right: 3px; }
```
